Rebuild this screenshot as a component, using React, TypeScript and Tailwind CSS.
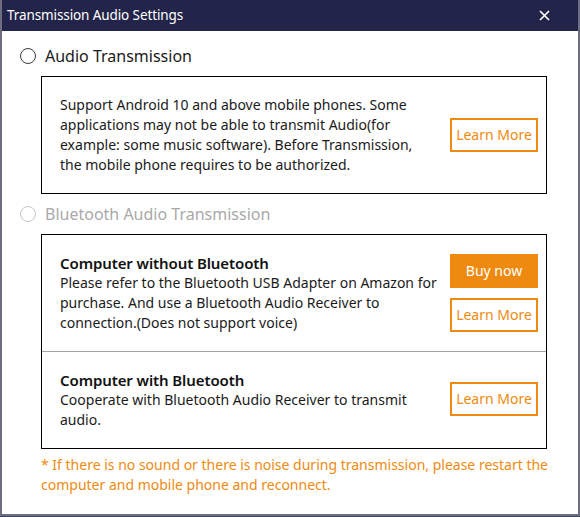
import React from 'react';

const ORANGE = 'text-[#ef8a10]';

function Radio({ label, disabled }: { label: string; disabled?: boolean }) {
  return (
    <div className="flex items-center h-[24px] pl-[18px]">
      <span
        className={`w-[16px] h-[16px] rounded-full border ${
          disabled ? 'border-[#c4c4c4]' : 'border-[#3a3a3a]'
        } bg-white`}
      />
      <span
        className={`ml-[9px] text-[16px] leading-[24px] ${
          disabled ? 'text-[#a9a9a9]' : 'text-[#1a1a1a]'
        }`}
      >
        {label}
      </span>
    </div>
  );
}

function OutlineButton({ children }: { children: React.ReactNode }) {
  return (
    <button
      className={`w-[88px] h-[34px] border-2 border-[#ef8a10] bg-white ${ORANGE} text-[14px] leading-none`}
    >
      {children}
    </button>
  );
}

function Lines({ lines }: { lines: string[] }) {
  return (
    <div className="text-[14px] leading-[20px] text-[#1a1a1a]">
      {lines.map((l) => (
        <div key={l} className="whitespace-nowrap">
          {l}
        </div>
      ))}
    </div>
  );
}

export default function App() {
  return (
    <div
      className="w-[580px] h-[517px] bg-[#3d4a5c] overflow-hidden"
      style={{ fontFamily: '"Noto Sans", "Open Sans", sans-serif' }}
    >
      <div className="h-[516px] flex flex-col bg-white border-x-2 border-b-2 border-[#6e6e80]">
        {/* title bar */}
        <div className="h-[31px] shrink-0 bg-[#232449] flex items-center justify-between pl-[5px] pr-[28px] text-white">
          <span className="text-[13.5px] tracking-[-0.1px]">Transmission Audio Settings</span>
          <svg width="11" height="11" viewBox="0 0 11 11" className="text-white">
            <path d="M1 1 L10 10 M10 1 L1 10" stroke="currentColor" strokeWidth="1.7" />
          </svg>
        </div>

        <div className="mt-[13px]">
          <Radio label="Audio Transmission" />
        </div>

        <div className="mt-[8px] ml-[39px] w-[506px] h-[118px] border border-black flex items-center justify-between pl-[18px] pr-[8px]">
          <Lines
            lines={[
              'Support Android 10 and above mobile phones. Some',
              'applications may not be able to transmit Audio(for',
              'example: some music software). Before Transmission,',
              'the mobile phone requires to be authorized.',
            ]}
          />
          <OutlineButton>Learn More</OutlineButton>
        </div>

        <div className="mt-[8px]">
          <Radio label="Bluetooth Audio Transmission" disabled />
        </div>

        <div className="mt-[8px] ml-[39px] w-[506px] border border-black flex flex-col">
          <div className="h-[117px] flex items-center justify-between pl-[18px] pr-[8px] border-b border-[#a0a0a0]">
            <div>
              <div className="text-[15px] leading-[20px] font-semibold text-[#111] tracking-[-0.1px]">
                Computer without Bluetooth
              </div>
              <Lines
                lines={[
                  'Please refer to the Bluetooth USB Adapter on Amazon for',
                  'purchase. And use a Bluetooth Audio Receiver to',
                  'connection.(Does not support voice)',
                ]}
              />
            </div>
            <div className="flex flex-col gap-[10px]">
              <button className="w-[88px] h-[34px] bg-[#ef8a10] text-white text-[14px] leading-none">
                Buy now
              </button>
              <OutlineButton>Learn More</OutlineButton>
            </div>
          </div>
          <div className="h-[96px] flex items-center justify-between pl-[18px] pr-[8px]">
            <div>
              <div className="text-[15px] leading-[20px] font-semibold text-[#111] tracking-[-0.1px]">
                Computer with Bluetooth
              </div>
              <Lines
                lines={[
                  'Cooperate with Bluetooth Audio Receiver to transmit',
                  'audio.',
                ]}
              />
            </div>
            <div className="mb-[3px]">
              <OutlineButton>Learn More</OutlineButton>
            </div>
          </div>
        </div>

        <div className={`mt-[6px] ml-[39px] text-[14px] leading-[20px] ${ORANGE}`}>
          <div className="whitespace-nowrap">
            * If there is no sound or there is noise during transmission, please restart the
          </div>
          <div className="whitespace-nowrap">computer and mobile phone and reconnect.</div>
        </div>
      </div>
    </div>
  );
}
